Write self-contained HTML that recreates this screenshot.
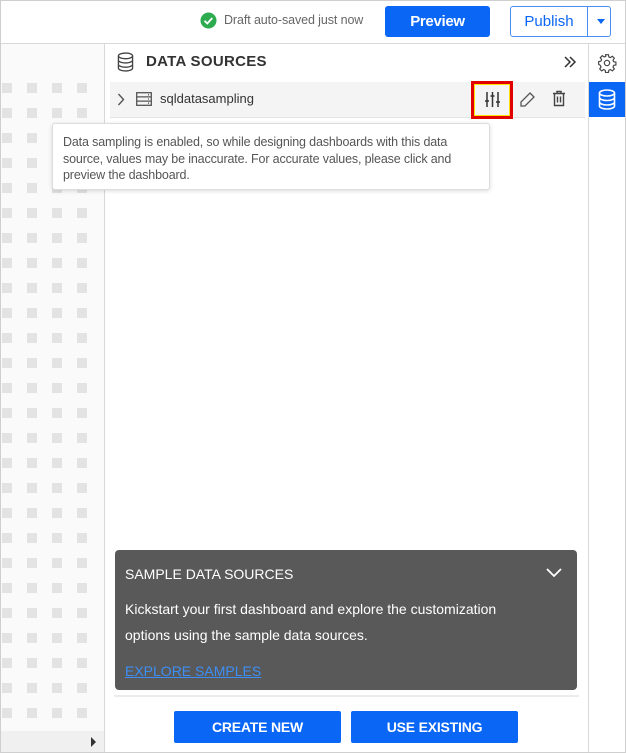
<!DOCTYPE html>
<html><head><meta charset="utf-8"><style>
*{box-sizing:border-box;margin:0;padding:0}
body{width:626px;height:753px;overflow:hidden;background:#fff;font-family:"Liberation Sans",sans-serif;position:relative}
.abs{position:absolute}
.frame{left:0;top:0;width:626px;height:753px;border:1px solid #cfcfcf}
.dot{position:absolute;width:10px;height:10px;background:#e3e3e3}
</style></head><body>
<div class="abs frame"></div>
<div class="abs" style="left:1px;top:43px;width:624px;height:1px;background:#d8d8d8"></div>
<svg class="abs" style="left:200px;top:12px" width="17" height="17"><circle cx="8.5" cy="8.5" r="8" fill="#2dac4f"/><path d="M4.5 8.7l2.8 2.8 5-5.5" stroke="#fff" stroke-width="1.8" fill="none"/></svg>
<div class="abs" style="left:224px;top:13px;font-size:12.5px;color:#666;letter-spacing:-.1px">Draft auto-saved just now</div>
<div class="abs" style="left:385px;top:6px;width:105px;height:31px;background:#0a66f5;border-radius:3px;color:#fff;font-weight:bold;font-size:15px;text-align:center;line-height:31px;letter-spacing:-.3px">Preview</div>
<div class="abs" style="left:510px;top:6px;width:101px;height:31px;border:1px solid #4a8ef5;border-radius:3px"></div>
<div class="abs" style="left:510px;top:6px;width:78px;height:31px;color:#0a66f5;font-size:15px;text-align:center;line-height:31px">Publish</div>
<div class="abs" style="left:587px;top:7px;width:1px;height:29px;background:#4a8ef5"></div>
<div class="abs" style="left:597px;top:19px;border:4px solid transparent;border-top:5px solid #0a66f5"></div>
<div class="abs" style="left:1px;top:44px;width:103px;height:708px;background:#fafafa"></div>
<div class="abs" style="left:104px;top:44px;width:1px;height:708px;background:#d8d8d8"></div>
<div id="dots"></div>
<div class="abs" style="left:1px;top:731px;width:103px;height:21px;background:#f0f0f0"></div>
<div class="abs" style="left:91px;top:737px;border:5px solid transparent;border-left:5px solid #333;border-right:0"></div>
<div class="abs" style="left:588px;top:44px;width:1px;height:708px;background:#d8d8d8"></div>
<div class="abs" style="left:589px;top:82px;width:36px;height:35px;background:#0a66f5"></div>
<svg class="abs" style="left:597px;top:53px" width="20" height="20" viewBox="0 0 24 24" fill="none" stroke="#444" stroke-width="1.4"><circle cx="12" cy="12" r="3.2"/><path d="M10.3 2h3.4l.5 2.7 1.9.8 2.3-1.6 2.4 2.4-1.6 2.3.8 1.9 2.7.5v3.4l-2.7.5-.8 1.9 1.6 2.3-2.4 2.4-2.3-1.6-1.9.8-.5 2.7h-3.4l-.5-2.7-1.9-.8-2.3 1.6-2.4-2.4 1.6-2.3-.8-1.9L2 13.7v-3.4l2.7-.5.8-1.9-1.6-2.3 2.4-2.4 2.3 1.6 1.9-.8z"/></svg>
<svg class="abs" style="left:598px;top:89px" width="18" height="21" viewBox="0 0 18 21" fill="none" stroke="#fff" stroke-width="1.6"><ellipse cx="9" cy="4" rx="7.5" ry="3"/><path d="M1.5 4v13c0 1.7 3.4 3 7.5 3s7.5-1.3 7.5-3V4M1.5 8.5c0 1.7 3.4 3 7.5 3s7.5-1.3 7.5-3M1.5 13c0 1.7 3.4 3 7.5 3s7.5-1.3 7.5-3"/></svg>
<svg class="abs" style="left:117px;top:52px" width="17" height="20" viewBox="0 0 18 21" fill="none" stroke="#444" stroke-width="1.4"><ellipse cx="9" cy="4" rx="7.5" ry="3"/><path d="M1.5 4v13c0 1.7 3.4 3 7.5 3s7.5-1.3 7.5-3V4M1.5 8.5c0 1.7 3.4 3 7.5 3s7.5-1.3 7.5-3M1.5 13c0 1.7 3.4 3 7.5 3s7.5-1.3 7.5-3"/></svg>
<div class="abs" style="left:146px;top:53px;font-size:15px;font-weight:bold;color:#333;letter-spacing:.3px">DATA SOURCES</div>
<svg class="abs" style="left:563px;top:56px" width="14" height="12" fill="none" stroke="#333" stroke-width="1.5"><path d="M2 1l5 5-5 5M7 1l5 5-5 5"/></svg>
<div class="abs" style="left:110px;top:82px;width:475px;height:36px;background:#f4f4f4;border-bottom:1px solid #e4e4e4"></div>
<svg class="abs" style="left:117px;top:93px" width="8" height="13" fill="none" stroke="#555" stroke-width="1.4"><path d="M1.5 1l5 5.5-5 5.5"/></svg>
<svg class="abs" style="left:136px;top:92px" width="16" height="14" fill="none" stroke="#555" stroke-width="1.3"><rect x=".7" y=".7" width="14.6" height="12.6"/><path d="M.7 4.9h14.6M.7 9.1h14.6M12 2.8h1M12 7h1M12 11.2h1"/></svg>
<div class="abs" style="left:160px;top:91px;font-size:13px;color:#333">sqldatasampling</div>
<div class="abs" style="left:471px;top:81px;width:42px;height:38px;border:3px solid #e00000;outline:1px solid #ffe000;outline-offset:-4px"></div>
<svg class="abs" style="left:484px;top:91px" width="17" height="17" fill="none" stroke="#333" stroke-width="1.5"><path d="M3 1v15M8.5 1v15M14 1v15M1 10h4M6.5 5h4M12 11h4"/></svg>
<svg class="abs" style="left:519px;top:91px" width="17" height="17" fill="none" stroke="#555" stroke-width="1.3"><path d="M11 2l4 4-9 9H2v-4z"/></svg>
<svg class="abs" style="left:552px;top:90px" width="14" height="17" fill="none" stroke="#444" stroke-width="1.4"><path d="M1 3.5h12M5 3.5V1.5h4v2M2.5 3.5v12h9v-12M5.5 6.5v6M8.5 6.5v6"/></svg>
<div class="abs" style="left:52px;top:123px;width:438px;height:67px;background:#fff;border:1px solid #ddd;border-radius:3px;box-shadow:0 1px 4px rgba(0,0,0,.15);padding:10px 10px;font-size:12.5px;line-height:16.5px;color:#555;letter-spacing:-.15px">Data sampling is enabled, so while designing dashboards with this data source, values may be inaccurate. For accurate values, please click and preview the dashboard.</div>
<div class="abs" style="left:115px;top:550px;width:462px;height:140px;background:#595959;border-radius:4px;color:#fff">
<div class="abs" style="left:10px;top:16px;font-size:14px">SAMPLE DATA SOURCES</div>
<svg class="abs" style="left:431px;top:18px" width="16" height="10" fill="none" stroke="#fff" stroke-width="1.8"><path d="M1 1l7 7 7-7"/></svg>
<div class="abs" style="left:10px;top:46px;font-size:14px;line-height:26px;width:420px">Kickstart your first dashboard and explore the customization options using the sample data sources.</div>
<div class="abs" style="left:10px;top:113px;font-size:14px;color:#3d8ff5;text-decoration:underline">EXPLORE SAMPLES</div>
</div>
<div class="abs" style="left:114px;top:695px;width:465px;height:2px;background:#ececec"></div>
<div class="abs" style="left:174px;top:711px;width:167px;height:32px;background:#0a66f5;border-radius:2px;color:#fff;font-weight:bold;font-size:14px;text-align:center;line-height:32px;letter-spacing:-.2px">CREATE NEW</div>
<div class="abs" style="left:351px;top:711px;width:167px;height:32px;background:#0a66f5;border-radius:2px;color:#fff;font-weight:bold;font-size:14px;text-align:center;line-height:32px;letter-spacing:-.2px">USE EXISTING</div>
<script>
var h='';for(var y=83;y<725;y+=25)for(var x=2;x<100;x+=25)h+='<div class="dot" style="left:'+x+'px;top:'+y+'px"></div>';
document.getElementById('dots').innerHTML=h;
</script>
</body></html>
